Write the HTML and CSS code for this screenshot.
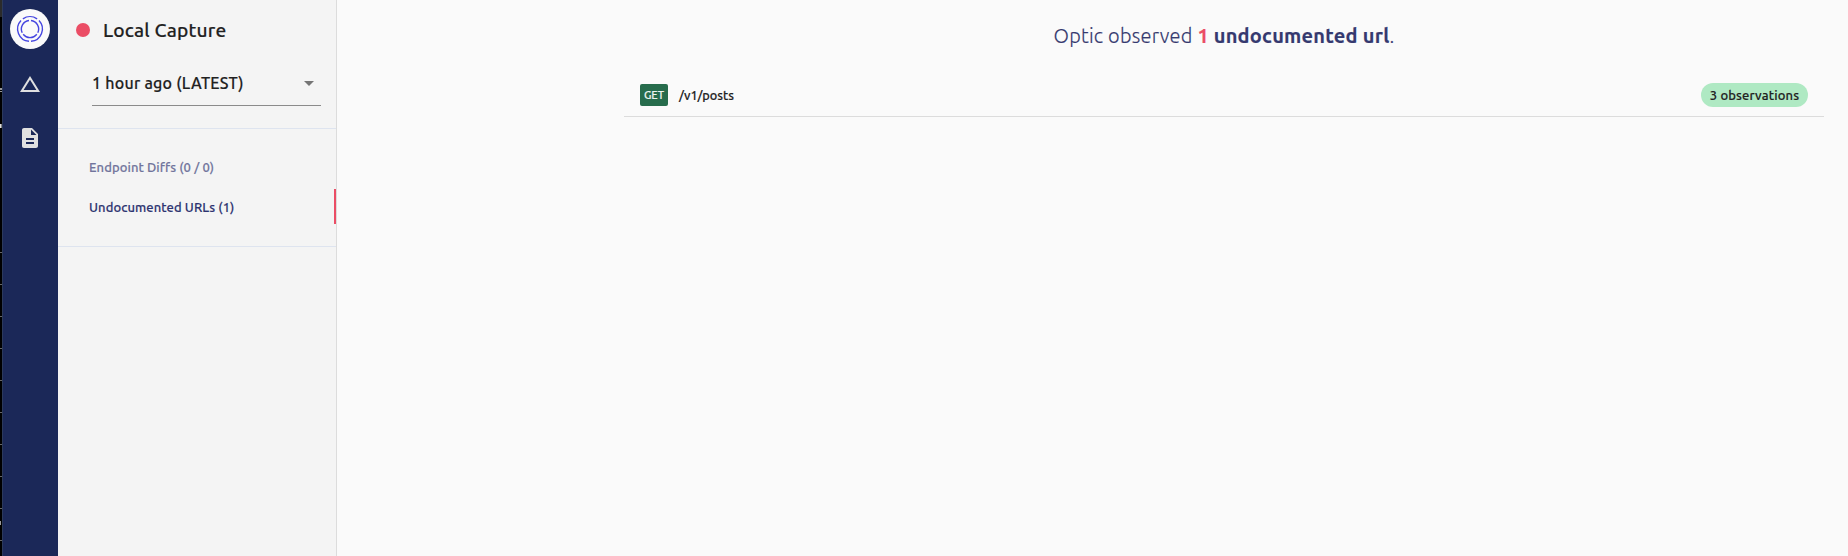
FILE: index.html
```html
<!DOCTYPE html>
<html lang="en">
<head>
<meta charset="utf-8">
<title>Local Capture</title>
<link rel="stylesheet" href="styles.css">
</head>
<body>
<div class="app">
  <div class="edge">
    <svg width="3" height="556" viewBox="0 0 3 556">
      <path fill="#2b2b2b" d="M0 0h2v17H0z"/>
      <path fill="#999" d="M0 88h2v2H0zM0 91h2v1H0zM0 521h1v4H0z"/>
      <path fill="#ddd" d="M0 124h1.6v4H0z"/>
      <path fill="#666" d="M0 252h2v1H0zM0 284h2v1H0zM0 316h2v1H0zM0 348h2v1H0zM0 380h2v1H0zM0 412h2v1H0zM0 444h2v1H0zM0 476h2v1H0zM0 508h2v1H0zM0 540h2v1H0z"/>
      <path fill="#2c3a5c" d="M2 0h1v556H2z"/>
    </svg>
  </div>
  <nav class="rail">
    <a class="logo">
      <svg width="40" height="40" viewBox="0 0 40 40" fill="none" stroke="#4646e0" stroke-width="1.4">
        <path d="M12.9 9.900A12.300 12.300 0 0 1 27.100 9.900M29 11.600A12.300 12.300 0 0 1 21 32.300M19 32.300A12.300 12.300 0 0 1 11 11.600"/>
        <path d="M21 11.500A8.600 8.600 0 0 1 27.800 23.700M26.800 25.300A8.600 8.600 0 0 1 13.200 25.300M12.200 23.700A8.600 8.600 0 0 1 19 11.500"/>
      </svg>
    </a>
    <a class="rail-item">
      <svg width="24" height="24" viewBox="0 0 24 24" fill="#e0e0e0"><path d="M12 7.77 18.39 18H5.61L12 7.77M12 4 2 20h20L12 4z"/></svg>
    </a>
    <a class="rail-item">
      <svg width="24" height="24" viewBox="0 0 24 24" fill="#e0e0e0"><path d="M14 2H6c-1.1 0-1.99.9-1.99 2L4 20c0 1.1.89 2 1.99 2H18c1.1 0 2-.9 2-2V8l-6-6zm2 16H8v-2h8v2zm0-4H8v-2h8v2zm-3-5V3.500L18.500 9H13z"/></svg>
    </a>
  </nav>
  <aside class="sidebar">
    <section class="capture">
      <h1 class="capture-title"><span class="dot"></span>Local Capture</h1>
      <div class="select">
        <span>1 hour ago (LATEST)</span>
        <svg width="24" height="24" viewBox="0 0 24 24" fill="#757575"><path d="m7 10 5 5 5-5z"/></svg>
      </div>
    </section>
    <section class="links">
      <a class="link">Endpoint Diffs (0 / 0)</a>
      <a class="link active">Undocumented URLs (1)</a>
    </section>
  </aside>
  <main class="main">
    <div class="content">
      <h2 class="summary">Optic observed <b class="count">1</b> <b>undocumented url</b>.</h2>
      <div class="row">
        <span class="method">GET</span>
        <span class="path">/v1/posts</span>
        <span class="chip">3 observations</span>
      </div>
    </div>
  </main>
</div>
</body>
</html>
```
FILE: styles.css
```css
* { box-sizing: border-box; }
body {
  margin: 0;
  background: #fafafa;
  color: #212121;
  font-family: Ubuntu, "Noto Sans", sans-serif;
  -webkit-text-stroke: 0.15px;
}
svg { display: block; }
.app { display: flex; height: 556px; overflow: hidden; }
.edge { width: 3px; background: #000; }
.rail {
  width: 55px;
  background: #1b2858;
  display: flex;
  flex-direction: column;
  align-items: center;
  padding: 9px 2px 0 0;
}
.logo { width: 40px; height: 40px; border-radius: 50%; background: #fafafa; margin-bottom: 23px; }
.rail-item { height: 24px; margin-bottom: 30px; }
.sidebar {
  width: 279px;
  background: #f4f4f4;
  border-right: 1px solid #dcdcdc;
  white-space: nowrap;
}
.capture { height: 129px; padding: 16px 15px 0 18px; border-bottom: 1px solid #dee4ef; }
.capture-title {
  margin: 0;
  height: 28px;
  display: flex;
  align-items: center;
  gap: 13px;
  font-size: 19.200px;
  font-weight: 500;
  line-height: 28px;
  letter-spacing: 0.18px;
}
.dot { width: 14px; height: 14px; border-radius: 50%; background: #eb4d65; }
.select {
  display: flex;
  align-items: center;
  justify-content: space-between;
  height: 44px;
  margin: 18px 0 0 16px;
  padding-bottom: 1px;
  border-bottom: 1px solid #8b8b8b;
  font-size: 16px;
  font-weight: 500;
  letter-spacing: 0.24px;
}
.links { height: 118px; padding-top: 20px; border-bottom: 1px solid #dee4ef; }
.link {
  display: flex;
  align-items: center;
  height: 35px;
  margin-bottom: 5px;
  padding: 1px 0 0 31px;
  color: #71749c;
  font-size: 13px;
  font-weight: 500;
  letter-spacing: 0.08px;
}
.active { color: #2d3370; border-right: 2px solid #eb4d65; }
.main { flex: 1; padding: 0 24px 0 287px; }
.content { width: 1200px; }
.summary {
  margin: 0;
  height: 72px;
  line-height: 72px;
  text-align: center;
  font-size: 20px;
  font-weight: 300;
  letter-spacing: 0.24px;
  color: #35396f;
  white-space: nowrap;
}
.summary b { font-weight: 700; }
.summary .count { color: #eb4d65; }
.row {
  display: flex;
  align-items: center;
  height: 45px;
  padding: 1px 16px 0;
  border-bottom: 1px solid #dcdcdc;
}
.method {
  width: 28px;
  height: 22px;
  border-radius: 2px;
  background: #276c4c;
  color: #eef4f0;
  font-size: 11px;
  font-weight: 500;
  line-height: 22px;
  text-align: center;
}
.path { margin-left: 11px; font-size: 12.700px; font-weight: 500; }
.chip {
  width: 107px;
  height: 24px;
  margin-left: auto;
  border-radius: 12px;
  background: #afe9c3;
  font-size: 13px;
  font-weight: 500;
  line-height: 24px;
  letter-spacing: 0.14px;
  text-align: center;
  white-space: nowrap;
}
```
